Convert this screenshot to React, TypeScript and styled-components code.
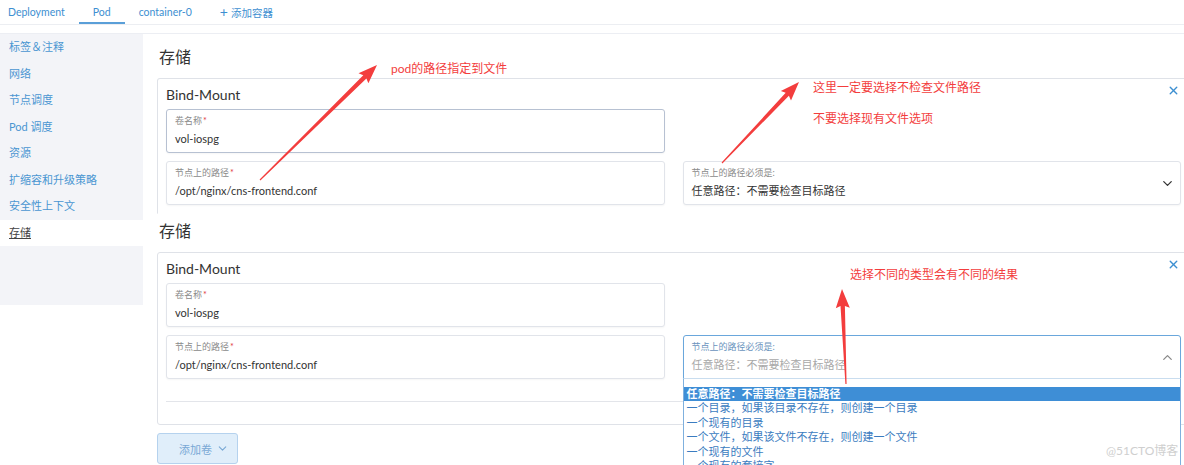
import React from 'react';
import styled, { createGlobalStyle } from 'styled-components';
import { X, ChevronDown, ChevronUp } from 'lucide-react';

const FONT = `Lato, 'Noto Sans CJK SC', 'Noto Sans', sans-serif`;
const BLUE = '#3d8fd1';
const RED = '#f33d3d';

const GlobalStyle = createGlobalStyle`
  html, body {
    margin: 0;
    padding: 0;
    overflow: hidden;
    background: #fff;
  }
  body {
    font-family: ${FONT};
    color: #333;
  }
`;

const Page = styled.div`
  position: relative;
  width: 1184px;
  height: 465px;
  overflow: hidden;
`;

const TabBar = styled.div`
  display: flex;
  height: 24px;
  border-bottom: 1px solid #eceef2;
`;

const Tab = styled.div<{ $active?: boolean; $first?: boolean }>`
  display: flex;
  align-items: center;
  box-sizing: border-box;
  height: 24px;
  padding: 2px 14px 0 ${({ $first }) => ($first ? '8px' : '14px')};
  font-size: 10.5px;
  color: ${BLUE};
  border-bottom: 2px solid ${({ $active }) => ($active ? '#5a9fd8' : 'transparent')};
`;

const Plus = styled.span`
  font-size: 14px;
  margin-right: 3px;
  line-height: 1;
`;

const Body = styled.div`
  display: flex;
  margin-top: 8px;
  border-top: 1px solid #eceef3;
`;

const Sidebar = styled.div`
  width: 143px;
  flex-shrink: 0;
  align-self: flex-start;
  background: #f3f4f8;
  padding-bottom: 59px;
`;

const SideItem = styled.div<{ $active?: boolean }>`
  height: 26.5px;
  line-height: 26.5px;
  padding-left: 9px;
  font-size: 11px;
  color: ${({ $active }) => ($active ? '#444' : '#4a96d2')};
  background: ${({ $active }) => ($active ? '#fff' : 'transparent')};
  text-decoration: ${({ $active }) => ($active ? 'underline' : 'none')};
`;

const Content = styled.div`
  flex: 1;
  min-width: 0;
  padding: 12px 0 0 14px;
`;

const Title = styled.h3<{ $gap?: number }>`
  margin: ${({ $gap }) => $gap ?? 0}px 0 10px 2px;
  font-size: 16px;
  line-height: 22px;
  font-weight: 400;
  color: #333;
`;

// the upper card is cropped in the screenshot, so it has no bottom edge
const Card = styled.div<{ $divided?: boolean; $cut?: boolean }>`
  position: relative;
  border: 1px solid #dfe2e8;
  border-bottom-color: ${({ $cut }) => ($cut ? 'transparent' : '#dfe2e8')};
  border-radius: ${({ $cut }) => ($cut ? '3px 3px 0 0' : '3px')};
  padding: 6px 8px ${({ $divided }) => ($divided ? '22px' : '8px')};
  margin-right: -6px;
`;

const CardHead = styled.div`
  font-size: 14px;
  line-height: 20px;
  margin-bottom: 4px;
  color: #333;
`;

const Close = styled.div`
  position: absolute;
  top: 5px;
  right: 9px;
  display: flex;
  color: ${BLUE};
`;

const Grid = styled.div`
  display: grid;
  grid-template-columns: 1fr 1fr;
  column-gap: 18px;
  row-gap: 8px;
`;

const Field = styled.div<{ $focus?: boolean; $open?: boolean }>`
  position: relative;
  box-sizing: border-box;
  height: 44px;
  padding: 5px 8px;
  border: 1px solid ${({ $focus, $open }) => ($open ? '#6aa7dc' : $focus ? '#b7c1d2' : '#e1e4ea')};
  border-radius: ${({ $open }) => ($open ? '3px 3px 0 0' : '3px')};
  box-shadow: 0 1px 2px rgba(0, 0, 0, 0.04);
  background: #fff;
`;

const Label = styled.div<{ $open?: boolean }>`
  font-size: 9px;
  line-height: 12px;
  color: ${({ $open }) => ($open ? '#6a93bd' : '#8a8a8a')};
  margin-bottom: 4px;
`;

const Req = styled.span`
  color: #e0393e;
  margin-left: 1px;
`;

const Value = styled.div<{ $muted?: boolean }>`
  font-size: 11px;
  line-height: 16px;
  color: ${({ $muted }) => ($muted ? '#a8a8a8' : '#333')};
`;

const Caret = styled.div<{ $open?: boolean }>`
  position: absolute;
  right: 5px;
  top: 14px;
  display: flex;
  color: ${({ $open }) => ($open ? '#888' : '#333')};
`;

const List = styled.div`
  position: absolute;
  top: 100%;
  left: -1px;
  right: -1px;
  border: 1px solid #7fb0de;
  border-top: 1px solid #c9ddef;
  background: #fff;
  padding-top: 8px;
  z-index: 5;
`;

const Option = styled.div<{ $selected?: boolean }>`
  font-size: 11px;
  line-height: 14.4px;
  padding: 0 3px;
  white-space: nowrap;
  color: ${({ $selected }) => ($selected ? '#fff' : '#3b7cc0')};
  background: ${({ $selected }) => ($selected ? '#3e8ed6' : 'transparent')};
  font-weight: ${({ $selected }) => ($selected ? 600 : 400)};
`;

const Divider = styled.div`
  margin-top: 22px;
  border-top: 1px solid #e3e5ea;
`;

const AddButton = styled.div`
  display: inline-flex;
  align-items: center;
  justify-content: space-between;
  box-sizing: border-box;
  margin-top: 8px;
  width: 81px;
  height: 31px;
  padding: 0 8px 0 21px;
  background: #e0eefa;
  border: 1px solid #b5d2ee;
  border-radius: 3px;
  font-size: 11px;
  color: #78a8d5;
`;

const Overlay = styled.svg`
  position: absolute;
  left: 0;
  top: 0;
  pointer-events: none;
  z-index: 10;
`;

const Note = styled.div<{ $x: number; $y: number }>`
  position: absolute;
  left: ${({ $x }) => $x}px;
  top: ${({ $y }) => $y}px;
  font-size: 12px;
  line-height: 16px;
  color: ${RED};
  white-space: nowrap;
  z-index: 10;
`;

const Watermark = styled.div`
  position: absolute;
  left: 1106px;
  top: 443px;
  font-size: 12px;
  line-height: 16px;
  color: #cfcfcf;
  z-index: 10;
`;

const sideItems = ['标签＆注释', '网络', '节点调度', 'Pod 调度', '资源', '扩缩容和升级策略', '安全性上下文', '存储'];

const hostTypes = [
  '任意路径：不需要检查目标路径',
  '一个目录，如果该目录不存在，则创建一个目录',
  '一个现有的目录',
  '一个文件，如果该文件不存在，则创建一个文件',
  '一个现有的文件',
  '一个现有的套接字',
];

// tapered arrow, tail -> tip
const arrowPoints = (x1: number, y1: number, x2: number, y2: number) => {
  const dx = x2 - x1;
  const dy = y2 - y1;
  const len = Math.hypot(dx, dy);
  const ux = dx / len;
  const uy = dy / len;
  const nx = -uy;
  const ny = ux;
  const L = 17;
  const W = 14;
  const t = 0.6;
  const s = 2.2;
  const bx = x2 - ux * L;
  const by = y2 - uy * L;
  const pts = [
    [x1 + nx * t, y1 + ny * t],
    [bx + nx * s, by + ny * s],
    [bx + nx * W / 2 - ux * 2, by + ny * W / 2 - uy * 2],
    [x2, y2],
    [bx - nx * W / 2 - ux * 2, by - ny * W / 2 - uy * 2],
    [bx - nx * s, by - ny * s],
    [x1 - nx * t, y1 - ny * t],
  ];
  return pts.map((p) => p.map((v) => v.toFixed(1)).join(',')).join(' ');
};

const arrows = [
  [260, 180, 377, 65],
  [722, 163, 799, 82],
  [846, 384, 842, 289],
];

const TextField: React.FC<{ label: string; value: string; focus?: boolean }> = ({ label, value, focus }) => (
  <Field $focus={focus}>
    <Label>
      {label}
      <Req>*</Req>
    </Label>
    <Value>{value}</Value>
  </Field>
);

const BindMount: React.FC<{ open?: boolean; focusFirst?: boolean; cut?: boolean }> = ({ open, focusFirst, cut }) => (
  <Card $divided={open} $cut={cut}>
    <CardHead>Bind-Mount</CardHead>
    <Close>
      <X size={13} strokeWidth={2.6} />
    </Close>
    <Grid>
      <TextField label="卷名称" value="vol-iospg" focus={focusFirst} />
      <div />
      <TextField label="节点上的路径" value="/opt/nginx/cns-frontend.conf" />
      <Field $open={open}>
        <Label $open={open}>节点上的路径必须是:</Label>
        <Value $muted={open}>任意路径：不需要检查目标路径</Value>
        <Caret $open={open}>
          {open ? <ChevronUp size={15} strokeWidth={2} /> : <ChevronDown size={15} strokeWidth={2} />}
        </Caret>
        {open && (
          <List>
            {hostTypes.map((t, i) => (
              <Option key={t} $selected={i === 0}>
                {t}
              </Option>
            ))}
          </List>
        )}
      </Field>
    </Grid>
    {open && <Divider />}
  </Card>
);

export default function App() {
  return (
    <Page>
      <GlobalStyle />
      <TabBar>
        <Tab $first>Deployment</Tab>
        <Tab $active>Pod</Tab>
        <Tab>container-0</Tab>
        <Tab>
          <Plus>+</Plus>添加容器
        </Tab>
      </TabBar>
      <Body>
        <Sidebar>
          {sideItems.map((item) => (
            <SideItem key={item} $active={item === '存储'}>
              {item}
            </SideItem>
          ))}
        </Sidebar>
        <Content>
          <Title>存储</Title>
          <BindMount focusFirst cut />
          <Title $gap={6}>存储</Title>
          <BindMount open />
          <AddButton>
            添加卷
            <ChevronDown size={13} strokeWidth={2} />
          </AddButton>
        </Content>
      </Body>

      <Overlay width={1184} height={465}>
        {arrows.map(([x1, y1, x2, y2], i) => (
          <polygon key={i} points={arrowPoints(x1, y1, x2, y2)} fill={RED} />
        ))}
      </Overlay>
      <Note $x={391} $y={61}>pod的路径指定到文件</Note>
      <Note $x={813} $y={80}>这里一定要选择不检查文件路径</Note>
      <Note $x={813} $y={111}>不要选择现有文件选项</Note>
      <Note $x={850} $y={267}>选择不同的类型会有不同的结果</Note>
      <Watermark>@51CTO博客</Watermark>
    </Page>
  );
}
